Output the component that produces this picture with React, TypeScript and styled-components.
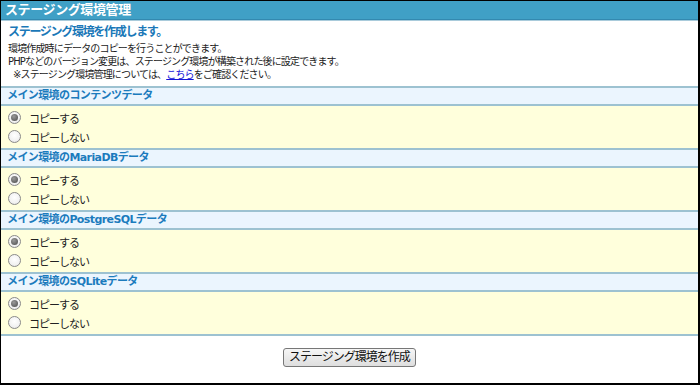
import React, { useState } from "react";
import styled, { createGlobalStyle } from "styled-components";

const Global = createGlobalStyle`
  html, body { margin: 0; padding: 0; background: #fff; }
  body { font-family: "DejaVu Sans", "Noto Sans CJK JP", sans-serif; color: #222; }
  * { box-sizing: border-box; }
`;

const Frame = styled.div`
  width: 700px;
  height: 385px;
  border: 1px solid #000;
  border-right-width: 2px;
  border-bottom-width: 2px;
  display: flex;
  flex-direction: column;
  background: #fff;
`;

const TitleBar = styled.div`
  height: 19px;
  background: #40a0c6;
  border-bottom: 1px solid #3389b0;
  box-shadow: 0 1px 0 #a9cbdb;
  color: #fff;
  font-weight: bold;
  font-size: 13px;
  letter-spacing: -0.4px;
  line-height: 17px;
  padding-left: 4px;
  margin-bottom: 1px;
`;

const Intro = styled.div`
  padding: 3px 7px 5px;
`;

const Lead = styled.div`
  color: #1b78b8;
  font-weight: bold;
  font-size: 12px;
  letter-spacing: -1.3px;
  line-height: 16px;
  margin-bottom: 2px;
`;

const Desc = styled.div`
  font-size: 10px;
  letter-spacing: -0.85px;
  line-height: 13px;
  color: #222;
`;

const Note = styled.div`
  padding-left: 5px;
`;

const Link = styled.a`
  color: #1414d8;
  text-decoration: underline;
`;

const SectionHead = styled.div`
  height: 20px;
  background: #ebf5fe;
  border-top: 2px solid #9dc2d1;
  border-bottom: 2px solid #9dc2d1;
  color: #1b7bbd;
  font-weight: bold;
  font-size: 11px;
  letter-spacing: -0.6px;
  line-height: 16px;
  padding-left: 6px;
`;

const Options = styled.div`
  background: #ffffdc;
  height: 42px;
  padding: 2px 0 2px 7px;
  display: flex;
  flex-direction: column;
`;

const OptionRow = styled.label`
  height: 19px;
  display: flex;
  align-items: center;
  gap: 8px;
  font-size: 11px;
  letter-spacing: -1px;
  color: #222;
  cursor: pointer;
`;

const Radio = styled.input.attrs({ type: "radio" })`
  appearance: none;
  margin: 0;
  width: 13px;
  height: 13px;
  border-radius: 50%;
  border: 1px solid #8a8a8a;
  background: radial-gradient(circle at 50% 40%, #ffffff 0%, #f2f2f2 60%, #dcdcdc 100%);
  display: grid;
  place-items: center;
  &:checked::after {
    content: "";
    width: 7px;
    height: 7px;
    border-radius: 50%;
    background: radial-gradient(circle at 40% 35%, #9a9a9a 0%, #5a5a5a 80%);
  }
`;

const Footer = styled.div`
  flex: 1;
  border-top: 2px solid #9dc2d1;
  display: flex;
  justify-content: center;
  padding-top: 12px;
`;

const Button = styled.button`
  height: 19px;
  padding: 0 5px;
  font-family: inherit;
  font-size: 12px;
  letter-spacing: -1px;
  color: #111;
  background: linear-gradient(#f6f6f6, #dedede);
  border: 1px solid #777;
  border-radius: 3px;
  line-height: 15px;
`;

const sections = [
  "メイン環境のコンテンツデータ",
  "メイン環境のMariaDBデータ",
  "メイン環境のPostgreSQLデータ",
  "メイン環境のSQLiteデータ",
];

export default function App() {
  const [values, setValues] = useState<string[]>(sections.map(() => "copy"));
  return (
    <>
      <Global />
      <Frame>
        <TitleBar>ステージング環境管理</TitleBar>
        <Intro>
          <Lead>ステージング環境を作成します。</Lead>
          <Desc>
            <div>環境作成時にデータのコピーを行うことができます。</div>
            <div>PHPなどのバージョン変更は、ステージング環境が構築された後に設定できます。</div>
            <Note>
              ※ステージング環境管理については、<Link href="#">こちら</Link>をご確認ください。
            </Note>
          </Desc>
        </Intro>
        {sections.map((title, i) => (
          <React.Fragment key={title}>
            <SectionHead>{title}</SectionHead>
            <Options>
              {[
                ["copy", "コピーする"],
                ["nocopy", "コピーしない"],
              ].map(([v, label]) => (
                <OptionRow key={v}>
                  <Radio
                    name={`s${i}`}
                    checked={values[i] === v}
                    onChange={() => setValues(values.map((x, j) => (j === i ? v : x)))}
                  />
                  {label}
                </OptionRow>
              ))}
            </Options>
          </React.Fragment>
        ))}
        <Footer>
          <Button>ステージング環境を作成</Button>
        </Footer>
      </Frame>
    </>
  );
}
